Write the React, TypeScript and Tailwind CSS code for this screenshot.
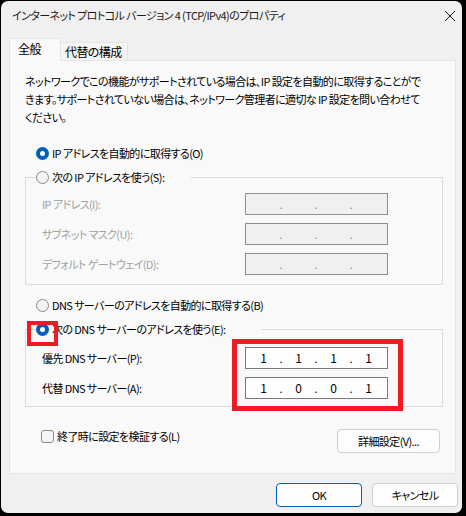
import React from 'react';

const jp = "font-['Noto_Sans_CJK_JP',sans-serif] [font-feature-settings:'palt'] tracking-[-0.6px]";

function Radio({ checked, label }: { checked?: boolean; label: string }) {
  return (
    <div className="flex items-center h-[18px] leading-[18px]">
      {checked ? (
        <span className="w-[13px] h-[13px] rounded-full bg-[#005fb8] flex items-center justify-center">
          <span className="w-[5px] h-[5px] rounded-full bg-white" />
        </span>
      ) : (
        <span className="w-[13px] h-[13px] rounded-full border border-[#8a8a8a] bg-[#f3f3f3]" />
      )}
      <span className="ml-[3px] whitespace-nowrap">{label}</span>
    </div>
  );
}

function IpBox({ values, disabled }: { values?: string[]; disabled?: boolean }) {
  const parts = values ?? ['', '', '', ''];
  return (
    <div
      className={
        'w-[143px] h-[22px] border flex items-center pl-px tracking-normal ' +
        (disabled ? 'bg-[#f0f0f0] border-[#8f8f8f] text-[#8a8a8a]' : 'bg-[#fdfdfd] border-[#7a7a7a] text-black')
      }
    >
      {parts.map((p, i) => (
        <React.Fragment key={i}>
          <span className="w-[33px] text-center leading-[18px] text-[12px]">{p}</span>
          {i < 3 && <span className="w-[2px] flex justify-center leading-[18px]">.</span>}
        </React.Fragment>
      ))}
    </div>
  );
}

function Row({ label, children, disabled }: { label: string; children: React.ReactNode; disabled?: boolean }) {
  return (
    <div className="flex items-center">
      <span className={'w-[203px] whitespace-nowrap ' + (disabled ? 'text-[#a0a0a0]' : 'text-black')}>{label}</span>
      {children}
    </div>
  );
}

export default function App() {
  return (
    <div className={'w-[466px] h-[516px] bg-black pt-px pl-px text-[11px] text-black ' + jp}>
      <div className="w-[461px] h-[512px] bg-[#f0f0f0] rounded-[7px] overflow-hidden flex flex-col">
        {/* title bar */}
        <div className="h-[28px] flex items-center justify-between pl-[11px] pr-[6px]">
          <span className="whitespace-nowrap text-[#1a1a1a]">インターネット プロトコル バージョン 4 (TCP/IPv4)のプロパティ</span>
          <svg width="12" height="12" viewBox="0 0 12 12" className="mt-px">
            <path d="M1 1L11 11M11 1L1 11" stroke="#1a1a1a" strokeWidth="1" fill="none" />
          </svg>
        </div>

        <div className="pt-[9px] pl-[8px]">
          {/* tabs */}
          <div className="flex items-end -mb-px relative z-10">
            <div className="w-[52px] h-[23px] border border-b-0 border-[#e5e5e5] bg-[#f9f9f9] rounded-t-[2px] pl-[8px] pt-px leading-[18px] text-[12px]">
              全般
            </div>
            <div className="w-[67px] h-[18px] mb-px border border-l-0 border-b-0 border-[#e5e5e5] bg-[#f5f5f5] pl-[4px] leading-[17px] text-[12px]">
              代替の構成
            </div>
          </div>

          {/* panel */}
          <div className="relative w-[447px] h-[414px] border border-[#e5e5e5] bg-[#f9f9f9] flex flex-col">
            <p className="pl-[15px] pt-[11px] leading-[18px] whitespace-nowrap">
              ネットワークでこの機能がサポートされている場合は、IP 設定を自動的に取得することがで
              <br />
              きます。サポートされていない場合は、ネットワーク管理者に適切な IP 設定を問い合わせて
              <br />
              ください。
            </p>

            <div className="mt-[18px] pl-[26px]">
              <Radio checked label="IP アドレスを自動的に取得する(O)" />
            </div>

            <fieldset className="mt-[5px] ml-[15px] w-[418px] border border-[#dcdcdc]">
              <legend className="ml-[10px] w-[155px] h-[20px] flex items-center">
                <Radio label="次の IP アドレスを使う(S):" />
              </legend>
              <div className="flex flex-col gap-[8px] pt-[6px] pb-[9px] pl-[16px]">
                <Row label="IP アドレス(I):" disabled>
                  <IpBox disabled />
                </Row>
                <Row label="サブネット マスク(U):" disabled>
                  <IpBox disabled />
                </Row>
                <Row label="デフォルト ゲートウェイ(D):" disabled>
                  <IpBox disabled />
                </Row>
              </div>
            </fieldset>

            <div className="mt-[11px] pl-[26px]">
              <Radio label="DNS サーバーのアドレスを自動的に取得する(B)" />
            </div>

            <fieldset className="mt-[5px] ml-[15px] w-[418px] border border-[#dcdcdc]">
              <legend className="ml-[10px] w-[225px] h-[20px] flex items-center">
                <Radio checked label="次の DNS サーバーのアドレスを使う(E):" />
              </legend>
              <div className="flex flex-col gap-[8px] pt-[8px] pb-[7px] pl-[16px]">
                <Row label="優先 DNS サーバー(P):">
                  <IpBox values={['1', '1', '1', '1']} />
                </Row>
                <Row label="代替 DNS サーバー(A):">
                  <IpBox values={['1', '0', '0', '1']} />
                </Row>
              </div>
            </fieldset>

            <div className="mt-[20px] pl-[31px] pr-[15px] flex justify-between items-start">
              <div className="flex items-center h-[18px]">
                <span className="w-[13px] h-[13px] rounded-[3px] border border-[#8a8a8a] bg-[#f5f5f5]" />
                <span className="ml-[3px] whitespace-nowrap">終了時に設定を検証する(L)</span>
              </div>
              <button className="mt-[2px] w-[103px] h-[24px] rounded-[4px] border border-[#d0d0d0] bg-[#fdfdfd] leading-[18px]">
                詳細設定(V)...
              </button>
            </div>

            {/* annotation overlays */}
            <div className="absolute left-[17px] top-[260px] w-[31px] h-[25px] border-[4px] border-[#ed1c24]" />
            <div className="absolute left-[222px] top-[278px] w-[171px] h-[72px] border-[5px] border-[#ed1c24]" />
          </div>
        </div>

        {/* dialog buttons */}
        <div className="mt-[9px] flex justify-end gap-[10px] pr-[4px]">
          <button className="w-[86px] h-[24px] rounded-[4px] border border-[#005fb8] bg-[#fdfdfd] leading-[18px]">OK</button>
          <button className="w-[86px] h-[24px] rounded-[4px] border border-[#d0d0d0] bg-[#fdfdfd] leading-[18px]">キャンセル</button>
        </div>
      </div>
    </div>
  );
}
